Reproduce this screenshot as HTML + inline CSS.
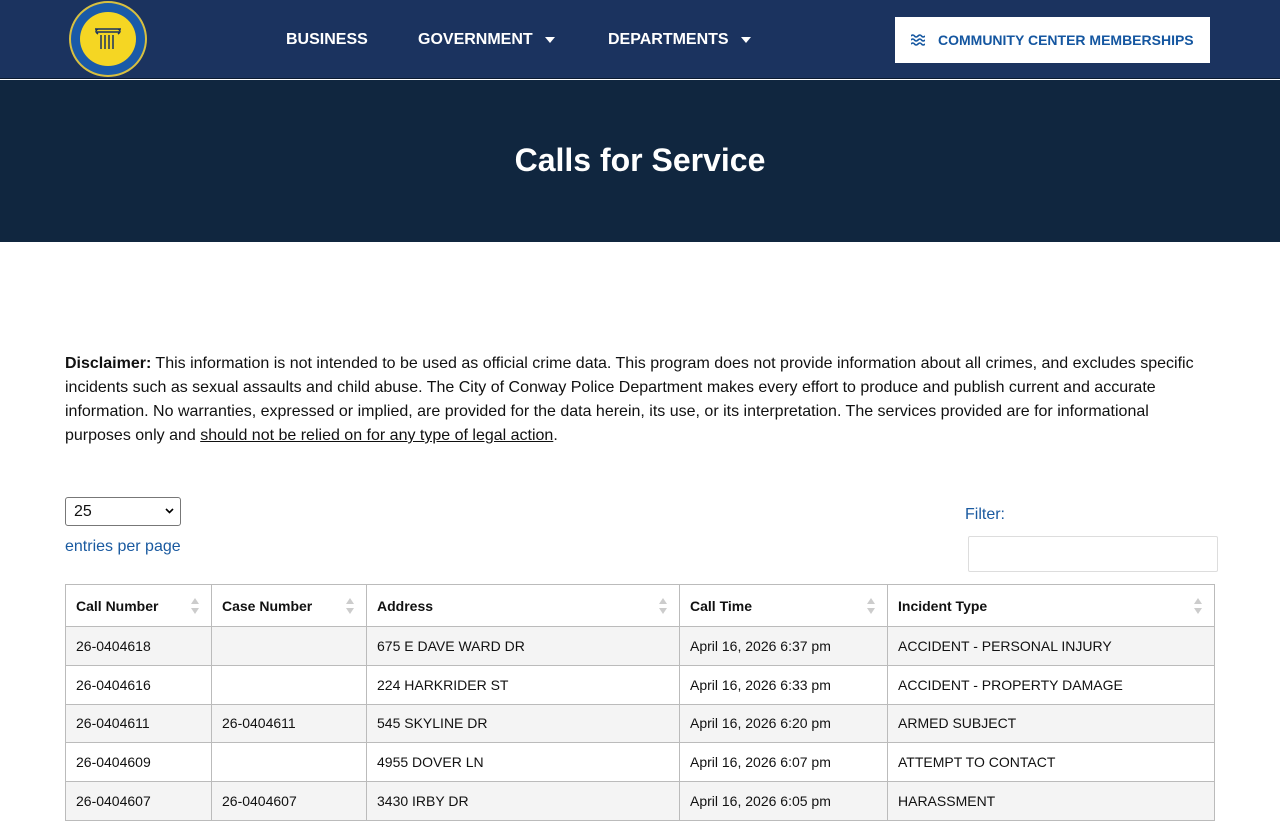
<!DOCTYPE html>
<html><head><meta charset="utf-8"><style>
*{box-sizing:border-box;margin:0;padding:0}
body{width:1280px;height:800px;overflow:hidden;font-family:"Liberation Sans",Arial,sans-serif;background:#fff;color:#111}
.top{position:absolute;left:0;top:0;width:1280px;height:79px;background:#1b335f;border-bottom:1px solid #0b1a30}
.logo{position:absolute;left:69px;top:1px;width:78px;height:76px;border-radius:50%;background:#1a5aa8;border:2px solid #d8c040}
.logo .in{position:absolute;left:9px;top:9px;width:56px;height:54px;border-radius:50%;background:#f5d623}
.nav{position:absolute;top:31px;color:#fff;font-weight:bold;font-size:16px}
.car{display:inline-block;margin-left:12px;border-left:5px solid transparent;border-right:5px solid transparent;border-top:6px solid #fff;vertical-align:middle}
.btn{position:absolute;left:895px;top:17px;width:315px;height:46px;background:#fff;color:#1456a0;font-weight:bold;font-size:14px;line-height:46px;padding-left:43px}
.hero{position:absolute;left:0;top:80px;width:1280px;height:162px;background:#10263f;color:#fff;text-align:center;font-size:32px;font-weight:bold;line-height:160px}
.disc{position:absolute;left:65px;top:352px;width:1150px;font-size:16px;line-height:24px}
.sel{position:absolute;left:65px;top:497px;width:116px;height:29px;border:1px solid #777;border-radius:3px;font-size:16px;padding:5px 8px}
.epp{position:absolute;left:65px;top:538px;color:#1a5aa0;font-size:16px}
.fl{position:absolute;left:965px;top:506px;color:#1a5aa0;font-size:16px}
.fi{position:absolute;left:968px;top:536px;width:250px;height:36px;border:1px solid #ddd;border-radius:2px}
table{position:absolute;left:65px;top:584px;border-collapse:collapse;font-size:14px;width:1150px}
td,th{border:1px solid #bbb;padding:0 10px;text-align:left;height:38.75px;line-height:16px}
th{height:42px;position:relative;padding-top:0}
.ar{position:absolute;right:12px;top:12px;width:8px;height:18px}
tr:nth-child(even) td{background:#f4f4f4}
</style></head><body>
<div class="top">
<div class="logo"><div class="in"><svg width="56" height="54" viewBox="0 0 56 54" fill="none" stroke="#1b335f" stroke-width="1.5"><path d="M15 17h26M17 20h22M18 17q-4 2 0 5M38 17q4 2 0 5M21 23v14M25 23v14M29 23v14M33 23v14"/></svg></div></div>
<div class="nav" style="left:286px">BUSINESS</div>
<div class="nav" style="left:418px">GOVERNMENT<span class="car"></span></div>
<div class="nav" style="left:608px">DEPARTMENTS<span class="car"></span></div>
<div class="btn"><svg style="position:absolute;left:16px;top:17px" width="14" height="12" viewBox="0 0 14 12" fill="none" stroke="#1456a0" stroke-width="1.6"><path d="M0 2q2-2 3.5 0t3.5 0 3.5 0 3.5 0M0 6q2-2 3.5 0t3.5 0 3.5 0 3.5 0M0 10q2-2 3.5 0t3.5 0 3.5 0 3.5 0"/></svg>COMMUNITY CENTER MEMBERSHIPS</div>
</div>
<div class="hero">Calls for Service</div>
<div class="disc"><b>Disclaimer:</b> This information is not intended to be used as official crime data. This program does not provide information about all crimes, and excludes specific incidents such as sexual assaults and child abuse. The City of Conway Police Department makes every effort to produce and publish current and accurate information. No warranties, expressed or implied, are provided for the data herein, its use, or its interpretation. The services provided are for informational purposes only and <u>should not be relied on for any type of legal action</u>.</div>
<div class="sel">25<svg style="position:absolute;right:6px;top:10px" width="9" height="6" viewBox="0 0 9 6"><path d="M1 1l3.5 3.5L8 1" stroke="#000" stroke-width="1.6" fill="none"/></svg></div>
<div class="epp">entries per page</div>
<div class="fl">Filter:</div>
<div class="fi"></div>
<table>
<tr><th style="width:146px">Call Number<svg class="ar" viewBox="0 0 8 18"><path d="M4 1L8 7H0zM4 17L8 11H0z" fill="#ccc"/></svg></th><th style="width:155px">Case Number<svg class="ar" viewBox="0 0 8 18"><path d="M4 1L8 7H0zM4 17L8 11H0z" fill="#ccc"/></svg></th><th style="width:313px">Address<svg class="ar" viewBox="0 0 8 18"><path d="M4 1L8 7H0zM4 17L8 11H0z" fill="#ccc"/></svg></th><th style="width:208px">Call Time<svg class="ar" viewBox="0 0 8 18"><path d="M4 1L8 7H0zM4 17L8 11H0z" fill="#ccc"/></svg></th><th>Incident Type<svg class="ar" viewBox="0 0 8 18"><path d="M4 1L8 7H0zM4 17L8 11H0z" fill="#ccc"/></svg></th></tr>
<tr><td>26-0404618</td><td></td><td>675 E DAVE WARD DR</td><td>April 16, 2026 6:37 pm</td><td>ACCIDENT - PERSONAL INJURY</td></tr>
<tr><td>26-0404616</td><td></td><td>224 HARKRIDER ST</td><td>April 16, 2026 6:33 pm</td><td>ACCIDENT - PROPERTY DAMAGE</td></tr>
<tr><td>26-0404611</td><td>26-0404611</td><td>545 SKYLINE DR</td><td>April 16, 2026 6:20 pm</td><td>ARMED SUBJECT</td></tr>
<tr><td>26-0404609</td><td></td><td>4955 DOVER LN</td><td>April 16, 2026 6:07 pm</td><td>ATTEMPT TO CONTACT</td></tr>
<tr><td>26-0404607</td><td>26-0404607</td><td>3430 IRBY DR</td><td>April 16, 2026 6:05 pm</td><td>HARASSMENT</td></tr>
</table>
</body></html>
